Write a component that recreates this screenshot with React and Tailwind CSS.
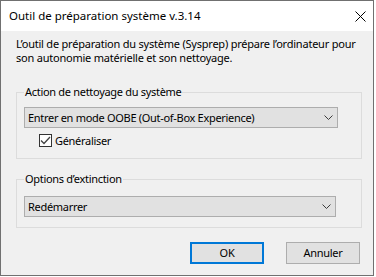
import React from 'react';

const font = { fontFamily: '"Noto Sans", "Open Sans", sans-serif' };

const Chevron = () => (
  <svg width="9" height="5" viewBox="0 0 9 5" className="shrink-0">
    <path d="M0.5 0.5 L4.5 4.5 L8.5 0.5" fill="none" stroke="#3c3c3c" strokeWidth="1" />
  </svg>
);

const Select = ({ value, width }) => (
  <div className={`flex items-center justify-between h-[21px] ${width} bg-[#e1e1e1] border border-[#adadad] pl-[3px] pr-[4px]`}>
    <span className="leading-[14px]">{value}</span>
    <Chevron />
  </div>
);

const App = () => {
  return (
    <div className="w-[376px] h-[277px] bg-white text-[11px] text-black whitespace-nowrap" style={font}>
      <div className="w-[374px] h-[276px] border border-[#707070] flex flex-col bg-[#f0f0f0]">
        {/* title bar */}
        <div className="h-[30px] bg-white flex items-center justify-between pl-[8px] pr-[6px]">
          <span className="leading-[14px] text-[11.5px]">Outil de préparation système v.3.14</span>
          <svg width="11" height="11" viewBox="0 0 11 11" className="mr-[1px]">
            <path d="M0.5 0.5 L10.5 10.5 M10.5 0.5 L0.5 10.5" stroke="#000" strokeWidth="1" />
          </svg>
        </div>

        <div className="flex flex-col pl-[15px] pr-[12px] tracking-[-0.3px]">
          <p className="pt-[6px] leading-[14px] tracking-[-0.22px]">
            L’outil de préparation du système (Sysprep) prépare l’ordinateur pour
            <br />
            son autonomie matérielle et son nettoyage.
          </p>

          <fieldset className="mt-[20px] w-[346px] h-[74px] border border-[#dcdcdc] px-[7px]">
            <legend className="px-[1px] leading-[14px]">Action de nettoyage du système</legend>
            <div className="mt-[8px]">
              <Select value="Entrer en mode OOBE (Out-of-Box Experience)" width="w-[314px]" />
            </div>
            <label className="flex items-center gap-[3px] ml-[15px] mt-[4px]">
              <span className="w-[13px] h-[13px] border border-[#333] bg-white flex items-center justify-center">
                <svg width="11" height="9" viewBox="0 0 11 9">
                  <path d="M1 4.5 L4 7.5 L10 1" fill="none" stroke="#444" strokeWidth="1.3" />
                </svg>
              </span>
              <span className="leading-[14px] mt-[2px]">Généraliser</span>
            </label>
          </fieldset>

          <fieldset className="mt-[13px] w-[346px] h-[56px] border border-[#dcdcdc] px-[7px]">
            <legend className="px-[1px] leading-[14px]">Options d’extinction</legend>
            <div className="mt-[10px]">
              <Select value="Redémarrer" width="w-[312px]" />
            </div>
          </fieldset>

          <div className="flex justify-end gap-[22px] mt-[14px] pr-[1px]">
            <button className="w-[74px] h-[22px] bg-[#e1e1e1] border-2 border-[#0078d7] leading-[14px]">OK</button>
            <button className="w-[74px] h-[22px] bg-[#e1e1e1] border border-[#adadad] leading-[14px]">Annuler</button>
          </div>
        </div>
      </div>
    </div>
  );
};

export default App;
